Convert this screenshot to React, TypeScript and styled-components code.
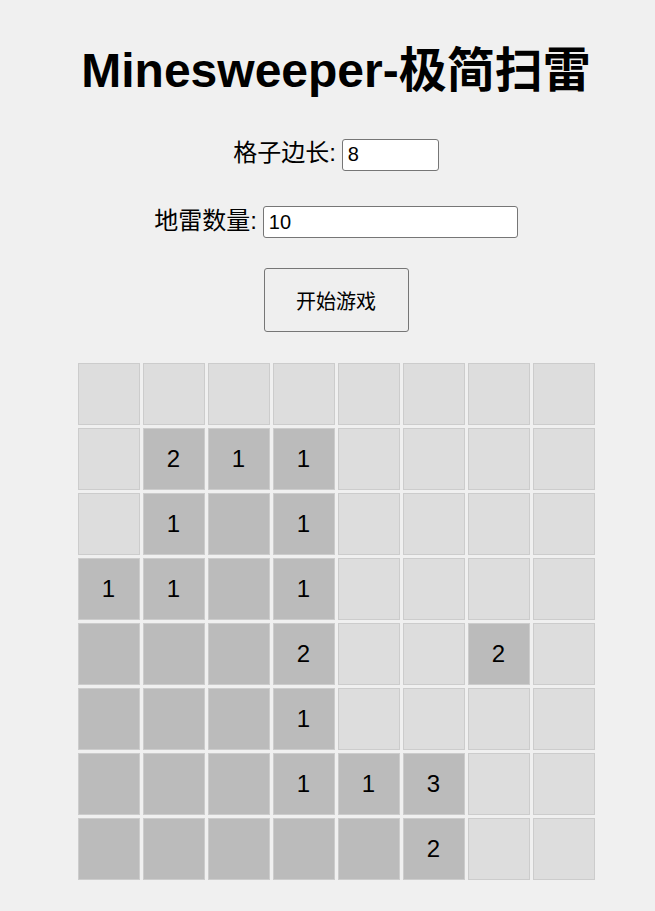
import React, { useState } from "react";
import styled, { createGlobalStyle } from "styled-components";

const GlobalStyle = createGlobalStyle`
  html, body {
    margin: 0;
    padding: 0;
    background: #f0f0f0;
  }
  body {
    font-family: "Liberation Sans", Arial, "Noto Sans CJK SC", sans-serif;
    color: #000;
  }
`;

const Page = styled.div`
  display: flex;
  flex-direction: column;
  align-items: center;
  padding-left: 17px;
  padding-bottom: 30px;
`;

const Title = styled.h1`
  font-size: 48px;
  font-weight: bold;
  line-height: 56px;
  margin: 43px 0 34px;
`;

const FieldRow = styled.div<{ $gapBelow: number }>`
  display: flex;
  align-items: baseline;
  margin-bottom: ${(p) => p.$gapBelow}px;
`;

const Label = styled.label`
  font-size: 24px;
  margin-right: 6px;
`;

const NumberInput = styled.input<{ $width: number }>`
  box-sizing: border-box;
  width: ${(p) => p.$width}px;
  height: 32px;
  padding: 1px 5px;
  font-family: inherit;
  font-size: 20px;
  border: 1px solid #767676;
  border-radius: 3px;
  background: #fff;
  outline: none;
`;

const StartButton = styled.button`
  box-sizing: border-box;
  width: 145px;
  height: 64px;
  margin-bottom: 31px;
  font-family: inherit;
  font-size: 20px;
  color: #000;
  background: #efefef;
  border: 1px solid #767676;
  border-radius: 3px;
  cursor: pointer;
`;

const Board = styled.div`
  display: grid;
  grid-template-columns: repeat(8, 62px);
  grid-auto-rows: 62px;
  gap: 3px;
`;

const Cell = styled.div<{ $open: boolean }>`
  box-sizing: border-box;
  display: flex;
  align-items: center;
  justify-content: center;
  border: 1px solid #cccccc;
  background: ${(p) => (p.$open ? "#bbbbbb" : "#dddddd")};
  font-size: 24px;
  cursor: pointer;
`;

// '.' = covered, '0' = opened empty, digit = opened with count
const layout = [
  "........",
  ".211....",
  ".101....",
  "1101....",
  "0002..2.",
  "0001....",
  "000113..",
  "000002..",
];

const App: React.FC = () => {
  const [size, setSize] = useState("8");
  const [mines, setMines] = useState("10");

  return (
    <Page>
      <GlobalStyle />
      <Title>Minesweeper-极简扫雷</Title>
      <FieldRow $gapBelow={30}>
        <Label htmlFor="size">格子边长:</Label>
        <NumberInput id="size" $width={97} value={size} onChange={(e) => setSize(e.target.value)} />
      </FieldRow>
      <FieldRow $gapBelow={30}>
        <Label htmlFor="mines">地雷数量:</Label>
        <NumberInput id="mines" $width={255} value={mines} onChange={(e) => setMines(e.target.value)} />
      </FieldRow>
      <StartButton>开始游戏</StartButton>
      <Board>
        {layout.map((row, r) =>
          row.split("").map((ch, c) => (
            <Cell key={`${r}-${c}`} $open={ch !== "."}>
              {ch !== "." && ch !== "0" ? ch : ""}
            </Cell>
          ))
        )}
      </Board>
    </Page>
  );
};

export default App;
